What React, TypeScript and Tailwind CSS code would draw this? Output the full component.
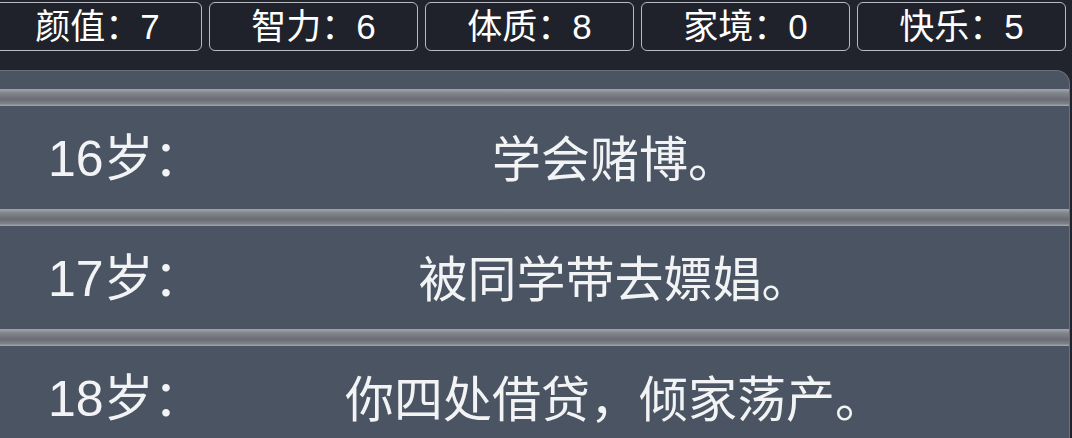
const stats = [
  { label: '颜值', value: 7 },
  { label: '智力', value: 6 },
  { label: '体质', value: 8 },
  { label: '家境', value: 0 },
  { label: '快乐', value: 5 },
]

const events = [
  { age: 16, text: '学会赌博。' },
  { age: 17, text: '被同学带去嫖娼。' },
  { age: 18, text: '你四处借贷，倾家荡产。' },
]

export default function App() {
  return (
    <div
      className="h-[438px] w-[1072px] overflow-hidden bg-[#21242d] text-white"
      style={{ fontFamily: '"Liberation Sans", "Noto Sans CJK SC", sans-serif' }}
    >
      {/* stat chips */}
      <div className="-ml-[7px] flex gap-[7px] pt-[2px]">
        {stats.map((s) => (
          <div
            key={s.label}
            className="flex h-[49px] w-[209px] items-center justify-center rounded-[6px] border border-[#b8bbc1] bg-[#1f222a] pb-[1px] text-[35px] leading-none"
          >
            {s.label}：{s.value}
          </div>
        ))}
      </div>

      {/* life log */}
      <div className="mt-[19px] h-[400px] w-[1070px] rounded-tr-[14px] border-t border-r border-[#6b717c] bg-[#4b5462] pt-[18px]">
        {events.map((e) => (
          <div key={e.age}>
            <div className="h-[17px] bg-[linear-gradient(to_bottom,#a2a6ac,#80848b_25%,#6a6d74_60%,#7b7f86_85%,#a6aaaf)]" />
            <div className="flex h-[103px] items-center pt-[4px] text-[#f2f3f5]">
              <div className="w-[160px] shrink-0 pb-[2px] pl-[48px] text-[50px] leading-none whitespace-nowrap">
                {e.age}岁：
              </div>
              <div className="flex-1 pt-[2px] text-center text-[49px] leading-none">{e.text}</div>
            </div>
          </div>
        ))}
      </div>
    </div>
  )
}
